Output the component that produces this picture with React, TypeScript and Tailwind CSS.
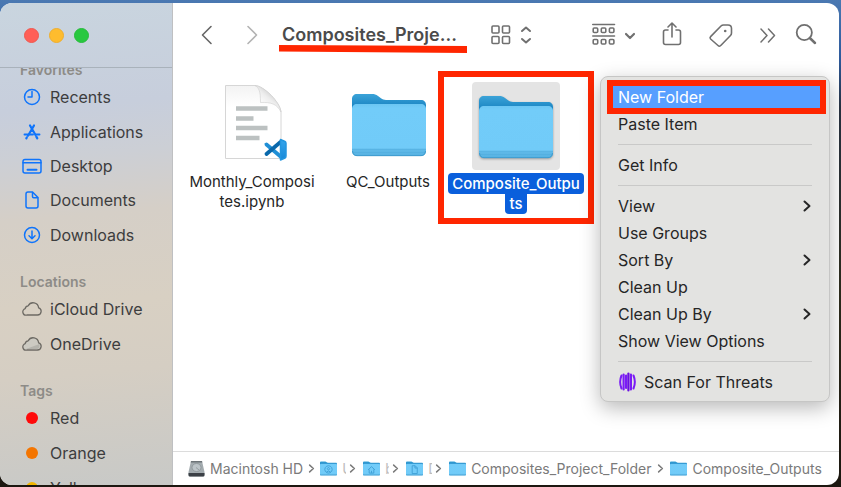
import type { ReactNode } from "react";

function Folder({ className, children }: { className: string; children?: ReactNode }) {
  return (
    <svg viewBox="0 0 74 64" className={className} aria-hidden="true">
      <defs>
        <linearGradient id="folderBack" x1="0" y1="0" x2="0" y2="1">
          <stop offset="0" stopColor="#3ba3d8" />
          <stop offset="0.25" stopColor="#1c86c4" />
        </linearGradient>
        <linearGradient id="folderFront" x1="0" y1="0" x2="0" y2="1">
          <stop offset="0" stopColor="#6cc6f3" />
          <stop offset="0.08" stopColor="#72ccf9" />
          <stop offset="0.84" stopColor="#71cbf8" />
          <stop offset="0.88" stopColor="#5fb9e8" />
          <stop offset="1" stopColor="#56b2e2" />
        </linearGradient>
      </defs>
      <path d="M5 1H20C22.500 1 24 1.500 26 3L29 5.300C30.500 6.500 32 7 34 7H69C72 7 74 9 74 12V50H0V6C0 3 2 1 5 1Z" fill="url(#folderBack)" />
      <path d="M5 11H69C72 11 74 13 74 16V58C74 61 72 63 69 63H5C2 63 0 61 0 58V16C0 13 2 11 5 11Z" fill="url(#folderFront)" />
      <path d="M0 56.500H74M1 59.500H73" stroke="#48a6d8" strokeWidth=".6" opacity=".6" />
      <path d="M.5 58C.5 61 2.500 62.700 5 62.700H69C71.500 62.700 73.500 61 73.500 58" fill="none" stroke="#3794c6" strokeWidth=".8" />
      {children}
    </svg>
  );
}

function NotebookFile() {
  return (
    <svg viewBox="0 0 64 78" className="h-[78px] w-16" aria-hidden="true">
      <defs>
        <linearGradient id="paper" x1="0" y1="0" x2="0" y2="1">
          <stop offset="0" stopColor="#f3f3f3" />
          <stop offset="0.3" stopColor="#fff" />
        </linearGradient>
        <linearGradient id="fold" x1="0.300" y1="0.800" x2="0.800" y2="0.200">
          <stop offset="0" stopColor="#fff" />
          <stop offset="0.5" stopColor="#ededed" />
          <stop offset="1" stopColor="#c4c4c4" />
        </linearGradient>
        <linearGradient id="codeRight" x1="0" y1="0" x2="0" y2="1">
          <stop offset="0" stopColor="#36a5ec" />
          <stop offset="1" stopColor="#1789d8" />
        </linearGradient>
      </defs>
      <path d="M1.500 1.500H31C40 2 56 18 57 28V74.500H1.500Z" fill="url(#paper)" stroke="#d6d6d6" strokeWidth="1" />
      <path d="M31 1.500C35 4 36.500 7 36.500 18.500C47 18 53 20 57 28C56 18 40 2 31 1.500Z" fill="url(#fold)" stroke="#cecece" strokeWidth=".6" />
      <path d="M12 24.500H43.500M12 34.500H29.500M12 44H43.500M12 54H35.500" stroke="#bcc1c1" strokeWidth="4.500" />
      <path d="M42.500 60.500L56.500 72.500" stroke="#1f8fd6" strokeWidth="3.800" strokeLinecap="round" />
      <path d="M42.500 70L56.500 58" stroke="#0968ab" strokeWidth="3.800" strokeLinecap="round" />
      <path d="M56.500 55.500L61 57.500Q62 58 62 59.500V72Q62 73.500 61 74L56.500 76Z" fill="url(#codeRight)" stroke="#2496df" strokeWidth="1.500" strokeLinejoin="round" />
    </svg>
  );
}

type SideItem = { label: string; icon: ReactNode };

const favorites: SideItem[] = [
  {
    label: "Recents",
    icon: (
      <>
        <circle cx="10" cy="10" r="7.500" />
        <path d="M10 4.500V10H6" />
      </>
    ),
  },
  {
    label: "Applications",
    icon: (
      <>
        <path d="M8 3.500L13.500 13M12 3.500L6 13.700M14.300 14.600L15.300 16.400M4.800 15.500L4.300 16.400" strokeWidth="2.200" />
        <path d="M2.500 12.500H11M14 12.500H17.500" strokeWidth="1.900" />
      </>
    ),
  },
  {
    label: "Desktop",
    icon: (
      <>
        <rect x="1" y="3.500" width="18" height="13.500" rx="2" />
        <path d="M1 6.800H19" />
        <path d="M5.500 13.700H14.500" strokeWidth="2" />
      </>
    ),
  },
  {
    label: "Documents",
    icon: (
      <>
        <path d="M6 2H10.500L16 7.500V16Q16 18 14 18H6Q4 18 4 16V4Q4 2 6 2Z" />
        <path d="M10.500 2.500V6.500Q10.500 7.700 11.700 7.700H15.500" />
      </>
    ),
  },
  {
    label: "Downloads",
    icon: (
      <>
        <circle cx="10" cy="10" r="7.500" />
        <path d="M10 6V13.500M7 10.800L10 13.700L13 10.800" />
      </>
    ),
  },
];

const cloud = "M5 16H15.500A3.700 3.700 0 0 0 16.600 8.800A5.500 5.500 0 0 0 6.200 6.800A3.300 3.300 0 0 0 3.200 9.700A3.200 3.200 0 0 0 5 16Z";

const locations: SideItem[] = [
  { label: "iCloud Drive", icon: <path d={cloud} stroke="#6d6a64" strokeWidth="1.300" /> },
  {
    label: "OneDrive",
    icon: (
      <>
        <path d={cloud} stroke="#6d6a64" strokeWidth="1.300" fill="#cccac2" />
        <path d="M4 15L17.500 10V13.500L15 15.200Z" fill="#b4b3ac" stroke="none" />
      </>
    ),
  },
];

const tags: SideItem[] = [
  { label: "Red", icon: <circle cx="10" cy="10" r="6" fill="#ff0a0a" stroke="none" /> },
  { label: "Orange", icon: <circle cx="10" cy="10" r="6" fill="#f47500" stroke="none" /> },
  { label: "Yellow", icon: <circle cx="10" cy="10" r="6" fill="#f2b600" stroke="none" /> },
];

function SideGroup({ title, items, height }: { title: string; items: SideItem[]; height: string }) {
  return (
    <section>
      <h2 className="h-5 pl-5 text-sm leading-5 font-semibold text-[#8d8b87]">{title}</h2>
      <ul className={`flex flex-col ${height}`}>
        {items.map((item) => (
          <li key={item.label} className="flex min-h-0 flex-1">
            <button className="flex w-full items-center gap-2 pl-[22px] text-left text-base text-[#3d3d3e]">
              <svg viewBox="0 0 20 20" className="size-5" fill="none" stroke="#0f74fb" strokeWidth="1.500" strokeLinecap="round" strokeLinejoin="round" aria-hidden="true">
                {item.icon}
              </svg>
              {item.label}
            </button>
          </li>
        ))}
      </ul>
    </section>
  );
}

function Sidebar() {
  return (
    <aside className="flex w-[173px] shrink-0 flex-col border-r border-[#bfc0c2] bg-[linear-gradient(175deg,#c6c9c8_0%,#c9d5df_0%,#c7cedc_22%,#cccfd5_32%,#d5cfc7_44%,#d8d0c3_62%,#d5cec3_76%,#c8c9c7_100%)]">
      <div className="flex h-[65px] shrink-0 items-center gap-[10px] border-b border-[#a9b2bb] pl-6">
        <button aria-label="Close" className="size-[15px] rounded-full border border-[#f0584f] bg-[#ff5f57]" />
        <button aria-label="Minimize" className="size-[15px] rounded-full border border-[#eeae2f] bg-[#febc2e]" />
        <button aria-label="Zoom" className="size-[15px] rounded-full border border-[#27bc3b] bg-[#28c840]" />
      </div>
      <nav className="min-h-0 flex-1 overflow-hidden">
        <div className="-mt-2 flex flex-col gap-5">
          <SideGroup title="Favorites" items={favorites} height="h-[172px]" />
          <SideGroup title="Locations" items={locations} height="h-[69px]" />
          <SideGroup title="Tags" items={tags} height="h-[104px]" />
        </div>
      </nav>
    </aside>
  );
}

function Tool({ label, className, box, children }: { label: string; className: string; box: string; children: ReactNode }) {
  return (
    <button aria-label={label} className="shrink-0">
      <svg viewBox={box} className={className} fill="none" stroke="#707070" strokeWidth="1.600" strokeLinecap="round" strokeLinejoin="round" aria-hidden="true">
        {children}
      </svg>
    </button>
  );
}

function Toolbar() {
  return (
    <header className="flex h-16 shrink-0 items-center pr-[22px] pl-[27px]">
      <div className="flex gap-6">
        <Tool label="Back" box="0 0 20 20" className="size-5">
          <path d="M11 1.500L2.500 10L11 18.500" stroke="#666" />
        </Tool>
        <Tool label="Forward" box="0 0 20 20" className="size-5">
          <path d="M4 1.500L12.500 10L4 18.500" stroke="#b3b3b3" />
        </Tool>
      </div>
      <div className="relative ml-[18px] shrink-0">
        <h1 className="text-lg leading-6 font-semibold text-[#4b4b4b]">Composites_Proje...</h1>
        <svg className="absolute top-[22px] -left-[3px] h-2 w-[188px]" viewBox="0 0 188 8" aria-hidden="true">
          <path d="M0 0L188 1V8L0 6.500Z" fill="#ff2600" />
        </svg>
      </div>
      <div className="min-w-0 flex-1" />
      <Tool label="View as icons" box="0 0 42 22" className="h-[22px] w-[42px]">
        <rect x="2" y="2" width="7" height="7" rx="1" />
        <rect x="12.500" y="2" width="7" height="7" rx="1" />
        <rect x="2" y="12.500" width="7" height="7" rx="1" />
        <rect x="12.500" y="12.500" width="7" height="7" rx="1" />
        <path d="M32 7L36 3.500L40 7M32 15L36 18.500L40 15" strokeWidth="2" />
      </Tool>
      <Tool label="Group items" box="0 0 44 24" className="ml-[60px] h-6 w-11">
        <path d="M.8 1.500H22.500M.8 13H22.500" />
        <rect x="1.200" y="5" width="4.500" height="4.500" rx="1" />
        <rect x="9.300" y="5" width="4.500" height="4.500" rx="1" />
        <rect x="17.400" y="5" width="4.500" height="4.500" rx="1" />
        <rect x="1.200" y="16.500" width="4.500" height="4.500" rx="1" />
        <rect x="9.300" y="16.500" width="4.500" height="4.500" rx="1" />
        <rect x="17.400" y="16.500" width="4.500" height="4.500" rx="1" />
        <path d="M34 11L38 15L42 11" strokeWidth="2.200" />
      </Tool>
      <Tool label="Share" box="0 0 20 26" className="ml-[26px] h-[26px] w-5">
        <path d="M6 8H3.500Q1.500 8 1.500 10V20.500Q1.500 22.500 3.500 22.500H16.500Q18.500 22.500 18.500 20.500V10Q18.500 8 16.500 8H14" />
        <path d="M10 15V1M6 5L10 1L14 5" />
      </Tool>
      <Tool label="Tags" box="0 0 26 26" className="ml-[26px] size-[26px]">
        <path d="M2.600 14.600L13 4Q14 3 15.500 3H20Q23.500 3 23.500 6.500V11Q23.500 12.500 22.500 13.500L13 23.300Q11.500 25 10 23.500L2.600 17Q1.500 15.700 2.600 14.600Z" />
        <circle cx="17.200" cy="9" r="1.300" fill="#707070" stroke="none" />
      </Tool>
      <Tool label="More toolbar items" box="0 0 18 20" className="ml-[25px] h-5 w-[18px]">
        <path d="M2 4L8 10.500L2 17M9.500 4L15.500 10.500L9.500 17" strokeWidth="1.500" />
      </Tool>
      <Tool label="Search" box="0 0 22 24" className="ml-[18px] h-6 w-[22px]">
        <circle cx="9.300" cy="9.500" r="7.600" strokeWidth="1.800" />
        <path d="M14.800 15L20 20" strokeWidth="2.500" />
      </Tool>
    </header>
  );
}

function Files() {
  return (
    <div className="flex min-h-0 flex-1 items-start pt-[15px] text-center text-[15px] leading-5 text-[#262626]">
      <button className="flex w-[158px] flex-col items-center gap-[2px]">
        <span className="flex h-[88px] items-start justify-center pt-[2px] pl-2">
          <NotebookFile />
        </span>
        <span>
          Monthly_Composi
          <br />
          tes.ipynb
        </span>
      </button>
      <button className="flex w-[114px] flex-col items-center gap-[2px]">
        <span className="flex h-[88px] items-start justify-center pt-[11px] pl-[2px]">
          <Folder className="h-16 w-[74px]" />
        </span>
        <span>QC_Outputs</span>
      </button>
      <div className="relative">
        <button className="flex w-[142px] flex-col items-center gap-[3px] text-white">
          <span className="flex size-[88px] items-start justify-center rounded bg-[#e4e4e4] pt-[13px]">
            <Folder className="h-16 w-[74px] drop-shadow-[0_1px_1px_rgba(0,0,0,0.3)]" />
          </span>
          <span className="flex flex-col items-center">
            <span className="rounded bg-[#0a5fdc] px-1 leading-[21px] font-medium">Composite_Outpu</span>
            <span className="rounded-b bg-[#0a5fdc] px-1 font-medium">ts</span>
          </span>
        </button>
        <div className="pointer-events-none absolute -top-[11px] -left-[7px] h-[153px] w-[156px] border-6 border-[#ff2600]" />
      </div>
    </div>
  );
}

function Chevron({ className }: { className: string }) {
  return (
    <svg viewBox="0 0 8 12" className={className} fill="none" stroke="currentColor" strokeWidth="2" strokeLinecap="round" strokeLinejoin="round" aria-hidden="true">
      <path d="M1.500 1.500L6.500 6L1.500 10.500" />
    </svg>
  );
}

function MenuItem({ label, submenu, icon }: { label: string; submenu?: boolean; icon?: ReactNode }) {
  return (
    <li role="none">
      <button role="menuitem" className="flex h-[27px] w-full items-center gap-2 pr-[18px] pl-[17px] text-left">
        {icon}
        <span className="flex-1">{label}</span>
        {submenu && <Chevron className="h-3 w-2" />}
      </button>
    </li>
  );
}

function Separator() {
  return (
    <li role="separator" className="flex h-[14px] items-center px-[17px]">
      <span className="h-px flex-1 bg-[#c9c9c8]" />
    </li>
  );
}

function ContextMenu() {
  return (
    <ul
      role="menu"
      className="absolute top-[73px] right-[9px] w-[230px] rounded-lg border border-[#c6c6c5] bg-[#e3e3e1] py-[6px] text-base text-[#262626] shadow-[0_6px_20px_rgba(0,0,0,0.28)]"
    >
      <li role="none" className="relative">
        <div className="pointer-events-none absolute -top-[3px] right-[3px] left-[6px] h-[34px] border-6 border-[#ff2600] bg-[#579fff]" />
        <button role="menuitem" className="relative flex h-[27px] w-full items-center pl-[17px] text-left text-white">
          New Folder
        </button>
      </li>
      <MenuItem label="Paste Item" />
      <Separator />
      <MenuItem label="Get Info" />
      <Separator />
      <MenuItem label="View" submenu />
      <MenuItem label="Use Groups" />
      <MenuItem label="Sort By" submenu />
      <MenuItem label="Clean Up" />
      <MenuItem label="Clean Up By" submenu />
      <MenuItem label="Show View Options" />
      <Separator />
      <MenuItem
        label="Scan For Threats"
        icon={
          <svg viewBox="0 0 18 20" className="h-5 w-[18px]" fill="none" strokeLinecap="round" aria-hidden="true">
            <path d="M3.500 3.500Q.8 10 3.500 16.500M15.500 3.500Q18.200 10 15.500 16.500" stroke="#7a1cf5" strokeWidth="2" />
            <path d="M5.600 2.500V17.500M8.100 3.500V16M12.900 2.500V17.500" stroke="#7a1cf5" strokeWidth="2.200" />
            <path d="M10.400 1.500V18.500" stroke="#6a0fe0" strokeWidth="2.200" />
          </svg>
        }
      />
    </ul>
  );
}

const parents = [
  { name: "Users", initial: "U", glyph: "M37 20A16 16 0 1 1 36.900 20M37 28A5 5 0 1 1 36.900 28M27 48Q37 38 47 48" },
  { name: "Home", initial: "b", glyph: "M22 38L37 24L52 38M27 36V52H47V36M37 52V42" },
  { name: "Documents", initial: "D", glyph: "M27 20H40L49 29V54H27ZM39 20V30H49" },
];

function PathBar() {
  return (
    <footer className="flex h-[34px] shrink-0 items-center border-t border-[#dcdcdc] pl-[15px] text-sm whitespace-nowrap text-[#7a7a7a]">
      <a href="#disk" className="flex items-center gap-[5px]">
        <svg viewBox="0 0 17 17" className="size-[17px]" aria-hidden="true">
          <path d="M3 1H14L16.500 12V15Q16.500 16.500 15 16.500H2Q.5 16.500 .5 15V12Z" fill="#a3abaf" />
          <path d="M.5 13H16.500V15Q16.500 16.500 15 16.500H2Q.5 16.500 .5 15Z" fill="#3b4046" />
          <path d="M3 1H14L14.300 2.500H2.700Z" fill="#6d7478" />
          <ellipse cx="8.500" cy="7.500" rx="4.500" ry="4" fill="#bcc4c8" stroke="#8b9397" strokeWidth=".8" />
          <path d="M8 7.500L11 10" stroke="#8b9397" strokeWidth=".8" />
        </svg>
        Macintosh HD
      </a>
      <Chevron className="mx-[5px] h-[9px] w-[7px]" />
      {parents.map((p) => (
        <a key={p.name} href={`#${p.name}`} aria-label={p.name} className="flex items-center">
          <Folder className="size-[17px]">
            <path d={p.glyph} fill="none" stroke="#3f9fd6" strokeWidth="4" />
          </Folder>
          <span className="ml-[5px] w-1 overflow-hidden text-[#bdbdbd]">{p.initial}</span>
          <Chevron className="mr-[7px] ml-[3px] h-[9px] w-[7px]" />
        </a>
      ))}
      <a href="#project" className="flex items-center gap-[5px]">
        <Folder className="size-[17px]" />
        Composites_Project_Folder
      </a>
      <Chevron className="mx-[6px] h-[9px] w-[7px]" />
      <a href="#outputs" className="flex items-center gap-[5px]">
        <Folder className="size-[17px]" />
        Composite_Outputs
      </a>
    </footer>
  );
}

export default function App() {
  return (
    <div className="h-screen bg-[linear-gradient(180deg,#4b79b2_0%,#2d5a9c_12%,#26303f_22%,#2b2a1c_60%,#1c1710_100%)] pt-[3px] pr-[2px] pb-[2px] font-['Inter',sans-serif]">
      <div className="relative flex h-full overflow-hidden rounded-xl bg-white">
        <Sidebar />
        <main className="flex min-w-0 flex-1 flex-col">
          <Toolbar />
          <Files />
          <PathBar />
        </main>
        <ContextMenu />
      </div>
    </div>
  );
}
